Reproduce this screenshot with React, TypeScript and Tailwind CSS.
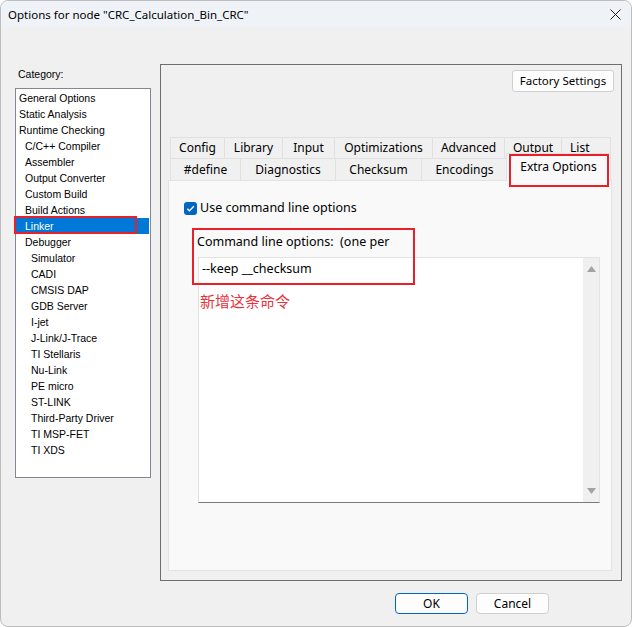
import React from "react";

const categories: { label: string; level: number }[] = [
  { label: "General Options", level: 0 },
  { label: "Static Analysis", level: 0 },
  { label: "Runtime Checking", level: 0 },
  { label: "C/C++ Compiler", level: 1 },
  { label: "Assembler", level: 1 },
  { label: "Output Converter", level: 1 },
  { label: "Custom Build", level: 1 },
  { label: "Build Actions", level: 1 },
  { label: "Linker", level: 1 },
  { label: "Debugger", level: 1 },
  { label: "Simulator", level: 2 },
  { label: "CADI", level: 2 },
  { label: "CMSIS DAP", level: 2 },
  { label: "GDB Server", level: 2 },
  { label: "I-jet", level: 2 },
  { label: "J-Link/J-Trace", level: 2 },
  { label: "TI Stellaris", level: 2 },
  { label: "Nu-Link", level: 2 },
  { label: "PE micro", level: 2 },
  { label: "ST-LINK", level: 2 },
  { label: "Third-Party Driver", level: 2 },
  { label: "TI MSP-FET", level: 2 },
  { label: "TI XDS", level: 2 },
];

// widths include the 1px that overlaps the next tab
const topTabs = [
  { label: "Config", w: "w-[55px] justify-center" },
  { label: "Library", w: "w-[59px] justify-center" },
  { label: "Input", w: "w-[53px] justify-center" },
  { label: "Optimizations", w: "w-[99px] justify-center" },
  { label: "Advanced", w: "w-[73px] justify-center" },
  { label: "Output", w: "w-[58px] justify-center" },
  { label: "List", w: "w-[50px] justify-start pl-[8px]" },
];

const bottomTabs = [
  { label: "#define", w: "w-[71px]" },
  { label: "Diagnostics", w: "w-[96px]" },
  { label: "Checksum", w: "w-[87px]" },
  { label: "Encodings", w: "w-[87px]" },
];

const indent = ["pl-[3px]", "pl-[9px]", "pl-[15px]"];

export default function App() {
  return (
    <div className="w-[632px] h-[627px] bg-white font-['Noto_Sans',sans-serif] text-black">
      <div className="w-full h-full bg-[#f0f0f0] rounded-[8px] border border-[#bdbdbd] overflow-hidden flex flex-col">
        {/* Title bar */}
        <div className="h-[26px] shrink-0 bg-[#eff3f8] flex items-center justify-between pl-[7px] pr-[10px]">
          <span className="text-[11.5px] leading-none pt-[1px]">Options for node "CRC_Calculation_Bin_CRC"</span>
          <svg width="11" height="11" viewBox="0 0 11 11" className="mt-[1px]">
            <path d="M0.5 0.5 L10.5 10.5 M10.5 0.5 L0.5 10.5" stroke="#1a1a1a" strokeWidth="1" />
          </svg>
        </div>

        <div className="flex">
          {/* Category column */}
          <div className="ml-[14px] w-[136px] shrink-0 flex flex-col">
            <div className="mt-[40px] h-[14px] text-[10.5px] leading-[14px] font-['Liberation_Sans',sans-serif] pl-[3px]">
              Category:
            </div>
            <div className="relative mt-[7px] h-[390px] bg-white border border-[#828790] pt-[1px] font-['Liberation_Sans',sans-serif] text-[10.5px]">
              {categories.map((c) => (
                <div
                  key={c.label}
                  className={`h-[16px] leading-[16px] mr-[1px] ${indent[c.level]} ${
                    c.label === "Linker" ? "bg-[#0078d7] text-white" : ""
                  }`}
                >
                  {c.label}
                </div>
              ))}
              {/* annotation */}
              <div className="absolute left-[-2px] top-[127px] w-[123px] h-[18px] border-2 border-[#e8202a]" />
            </div>
          </div>

          {/* Right panel */}
          <div className="ml-[9px] mt-[37px] w-[462px] h-[517px] border border-[#6e6e6e] flex flex-col">
            <div className="flex justify-end pr-[7px] pt-[5px]">
              <button className="w-[102px] h-[22px] rounded-[3px] border border-[#d0d0d0] bg-[#fdfdfd] text-[11.5px] leading-none">
                Factory Settings
              </button>
            </div>

            {/* Tabs */}
            <div className="mt-[45px] ml-[9px] flex flex-col text-[12px]">
              <div className="flex h-[21px]">
                {topTabs.map((t) => (
                  <div
                    key={t.label}
                    className={`${t.w} shrink-0 h-full border-t border-l border-r border-[#e0e0e0] -mr-[1px] bg-[#f0f0f0] flex items-center leading-none`}
                  >
                    {t.label}
                  </div>
                ))}
              </div>
              <div className="flex h-[22px] relative">
                {bottomTabs.map((t) => (
                  <div
                    key={t.label}
                    className={`${t.w} shrink-0 h-full border-t border-l border-r border-[#e0e0e0] -mr-[1px] bg-[#f0f0f0] flex items-center justify-center leading-none`}
                  >
                    {t.label}
                  </div>
                ))}
                <div className="relative z-10 shrink-0 w-[105px] h-[28px] -mt-[5px] -ml-[1px] border-t border-l border-r border-[#e0e0e0] bg-[#f9f9f9] flex items-center justify-center leading-none pb-[1px]">
                  Extra Options
                  <div className="absolute left-[2px] top-0 w-[100px] h-[33px] border-2 border-[#e8202a]" />
                </div>
              </div>
            </div>

            {/* Tab content */}
            <div className="relative ml-[7px] w-[444px] h-[391px] bg-[#f9f9f9] border border-[#e3e3e3] flex flex-col text-[12.5px]">
              <div className="flex items-center pl-[15px] pt-[20px]">
                <span className="w-[13px] h-[13px] rounded-[3px] bg-[#0067c0] flex items-center justify-center">
                  <svg width="9" height="9" viewBox="0 0 9 9">
                    <path d="M1.3 4.7 L3.5 6.8 L7.8 2.2" fill="none" stroke="#ffffff" strokeWidth="1.3" />
                  </svg>
                </span>
                <span className="ml-[3px] leading-[14px]">Use command line options</span>
              </div>

              <div className="ml-[28px] mt-[19px] h-[16px] leading-[16px]">Command line options:&nbsp; (one per</div>

              <div className="relative ml-[29px] mt-[7px] w-[402px] h-[246px] bg-white border border-[#e3e3e3] border-b-[#7a7a7a] flex">
                <div className="flex-1 pl-[3px] pt-[3px] leading-[16px]">--keep __checksum</div>
                <div className="w-[16px] bg-[#f0f0f0] flex flex-col justify-between items-center py-[8px]">
                  <svg width="9" height="6" viewBox="0 0 9 6">
                    <path d="M0 6 L4.5 0 L9 6 Z" fill="#a3a3a3" />
                  </svg>
                  <svg width="9" height="6" viewBox="0 0 9 6">
                    <path d="M0 0 L4.5 6 L9 0 Z" fill="#a3a3a3" />
                  </svg>
                </div>
                {/* annotation */}
                <div className="absolute left-[1px] top-[34px] text-[15px] leading-[18px] text-[#e8323c] font-['Noto_Sans_CJK_SC',sans-serif]">
                  新增这条命令
                </div>
              </div>

              {/* annotation */}
              <div className="absolute left-[23px] top-[47px] w-[223px] h-[57px] border-2 border-[#e8202a]" />
            </div>
          </div>
        </div>

        {/* Buttons */}
        <div className="flex justify-end gap-[8px] pr-[82px] mt-[12px] text-[12px]">
          <button className="w-[73px] h-[21px] rounded-[4px] border border-[#0067c0] bg-[#fdfdfd] leading-none">OK</button>
          <button className="w-[73px] h-[21px] rounded-[4px] border border-[#d0d0d0] bg-[#fdfdfd] leading-none">Cancel</button>
        </div>
      </div>
    </div>
  );
}
